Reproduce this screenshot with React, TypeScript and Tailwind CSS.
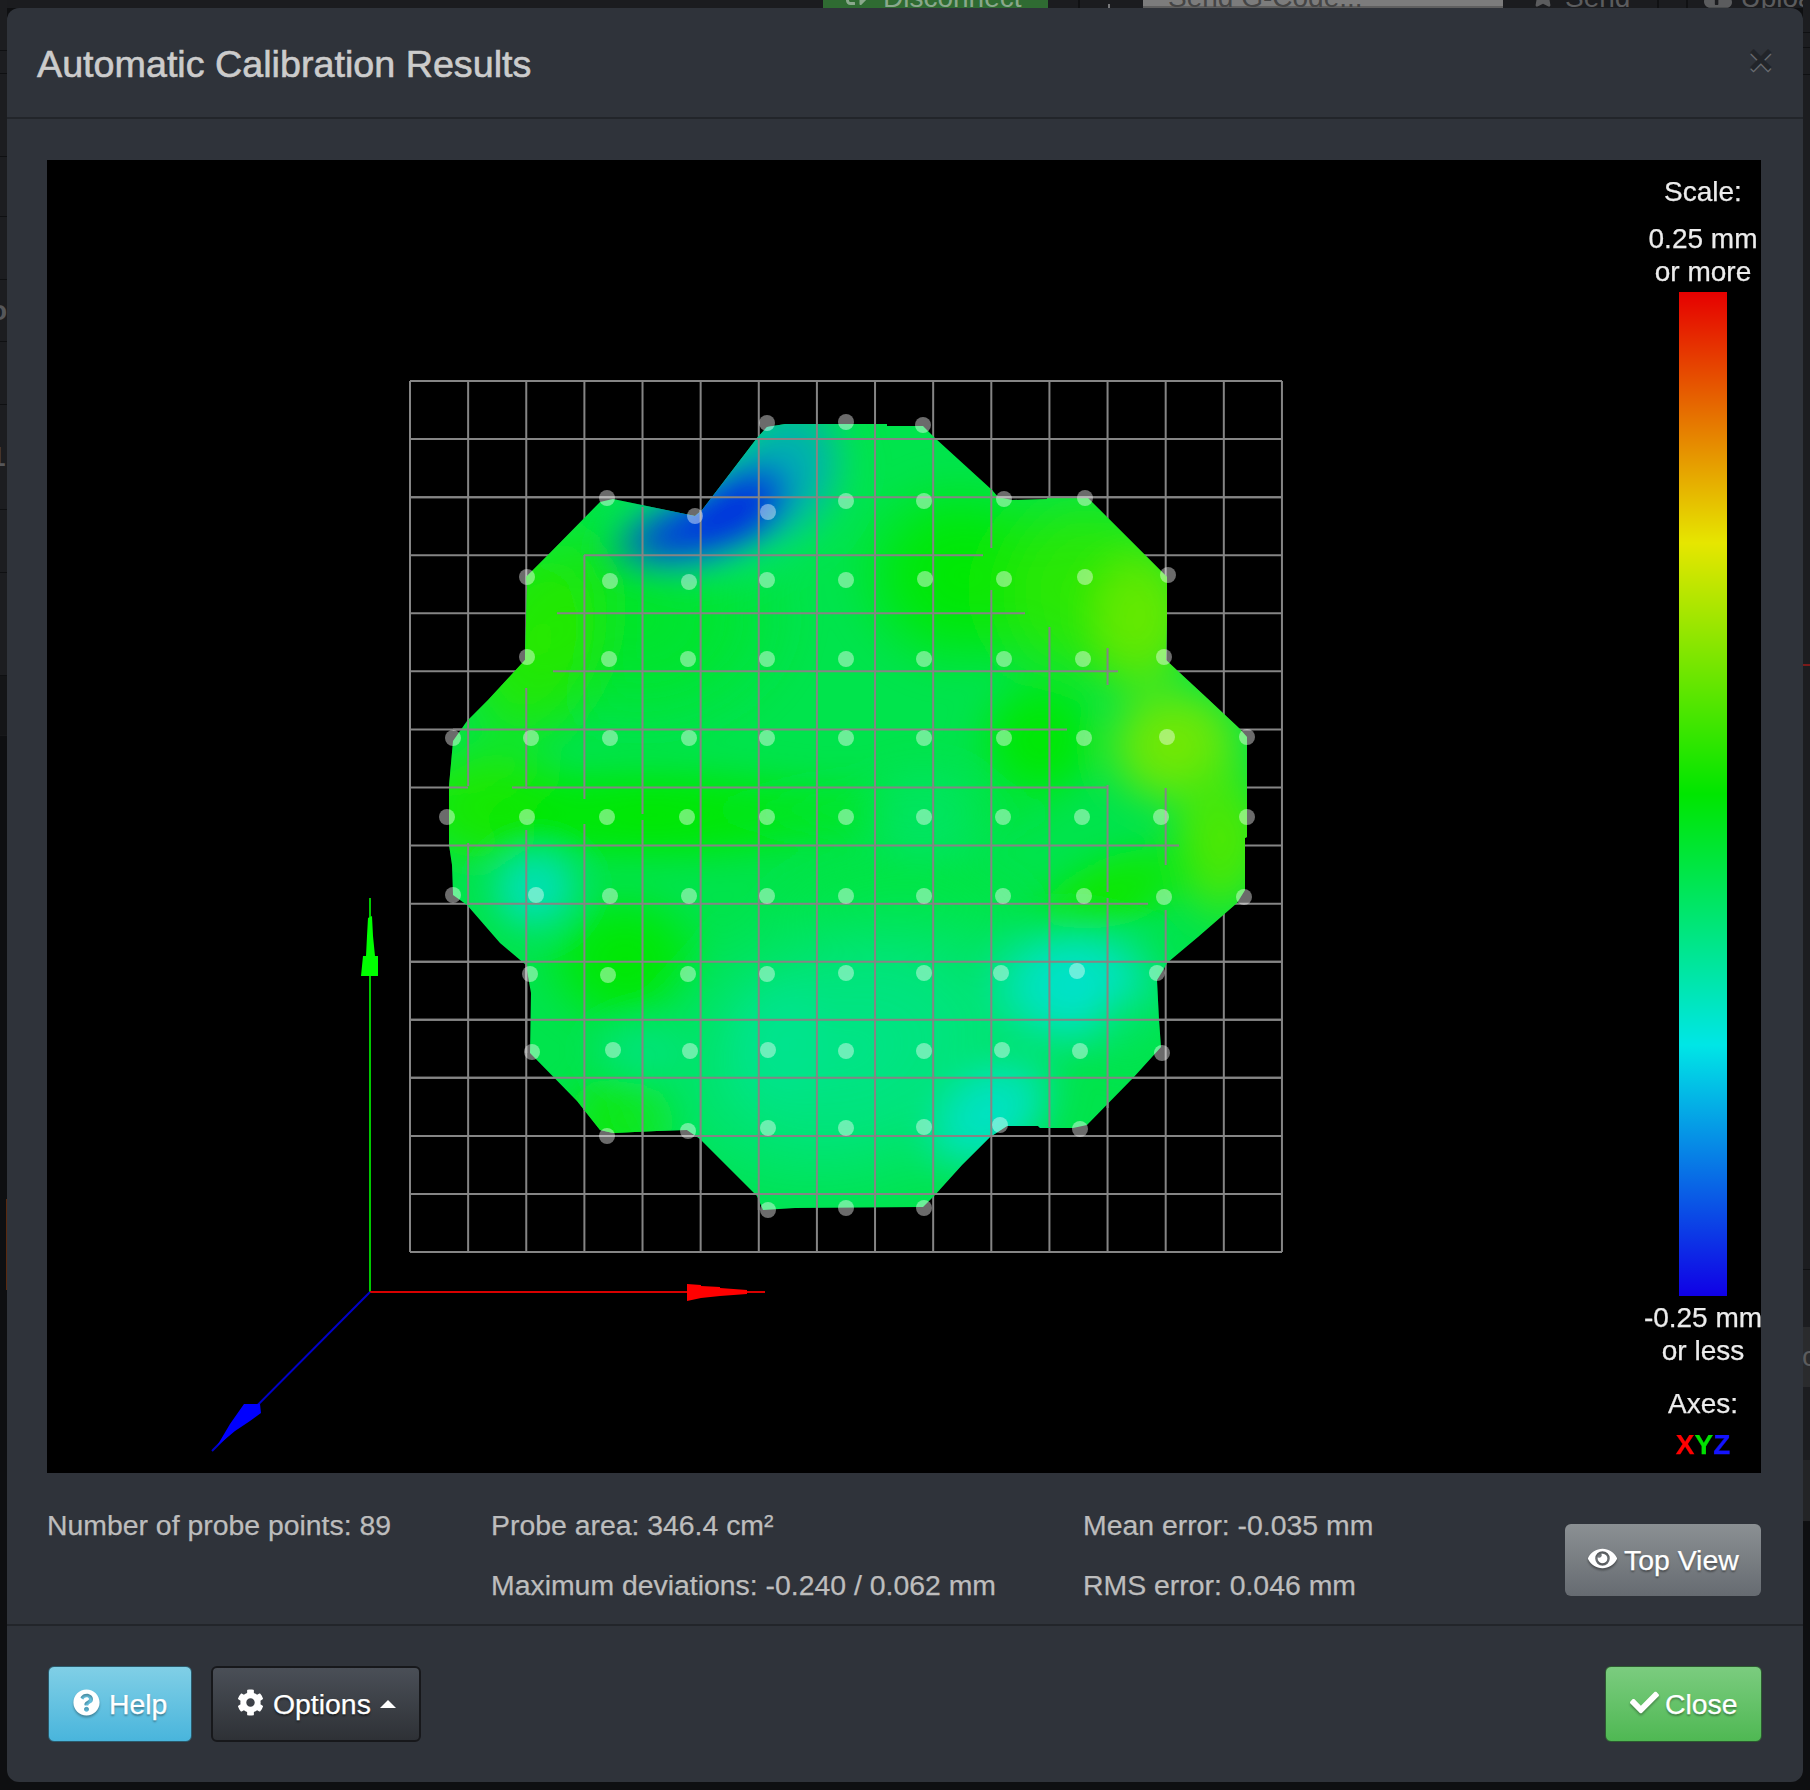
import { FaCheck, FaCloudUploadAlt, FaCog, FaEye, FaQuestionCircle, FaSignOutAlt, FaStar } from "react-icons/fa";

const font = "font-['Liberation_Sans','Arial',sans-serif]";

const outline =
  "767,427 785,424 887,424 887,426 923,426 935,438 992,490 998,497 1012,500 1047,499 1047,497 1087,497 1140,550 1167,577 1167,620 1166,660 1207,698 1239,728 1247,737 1247,837 1245,838 1245,890 1237,903 1198,937 1167,963 1162,972 1157,980 1159,1020 1161,1047 1133,1078 1087,1125 1073,1128 1040,1128 1038,1126 1007,1126 990,1137 962,1165 935,1195 923,1207 795,1208 763,1210 757,1196 700,1139 687,1130 657,1131 613,1133 600,1130 577,1101 530,1053 531,993 526,965 500,943 467,905 453,895 452,865 449,845 449,786 453,741 467,721 488,700 525,660 527,587 526,577 548,555 600,502 613,499 695,516 702,510 757,438";

// height colours laid over the base green: x, y, rx, ry, rotation, colour, strength
const blobs: [number, number, number, number, number, string, number][] = [
  [640, 620, 170, 130, 0, "#00e42c", 1],
  [540, 640, 90, 140, 20, "#26e800", 1],
  [960, 575, 120, 110, 0, "#00e800", 1],
  [1085, 590, 130, 125, 0, "#2ee800", 1],
  [1140, 620, 70, 95, 0, "#68e800", 1],
  [1040, 740, 75, 75, 0, "#00e800", 1],
  [1175, 745, 90, 80, 0, "#78e800", 1],
  [1220, 840, 65, 100, 0, "#50e800", 1],
  [1110, 895, 110, 50, -25, "#10e800", 1],
  [900, 905, 150, 60, 0, "#00e640", 1],
  [490, 805, 100, 75, 0, "#26e800", 1],
  [650, 815, 260, 60, 0, "#00e800", 1],
  [880, 810, 190, 40, 0, "#00e62c", 0.8],
  [625, 960, 95, 80, 0, "#00e800", 1],
  [625, 1120, 75, 60, 0, "#12e810", 1],
  [535, 888, 58, 56, -20, "#00e0b8", 1],
  [925, 815, 80, 60, 0, "#00e474", 0.7],
  [640, 1050, 60, 45, 0, "#00e490", 0.6],
  [850, 1050, 250, 170, -15, "#00e48a", 0.95],
  [780, 1040, 65, 80, 0, "#00e498", 0.6],
  [1075, 985, 105, 80, 0, "#00e2d0", 1],
  [990, 1115, 90, 62, -35, "#00e2c8", 1],
  [1130, 1030, 50, 50, 0, "#00e454", 0.6],
  [740, 495, 140, 100, -28, "#00e082", 1],
  [785, 470, 68, 88, 20, "#00a8b8", 1],
  [695, 530, 100, 46, -15, "#0038e0", 1],
  [738, 505, 68, 48, -30, "#0030e0", 1],
];

const fullH = [1, 2, 10, 11, 12, 13, 14, 15];
const gridPos = Array.from({ length: 16 }, (_, i) => i);
const gridX = (i: number) => 410 + i * 58.13;
const gridY = (j: number) => 381 + j * 58.07;

// grid pieces that the mesh does not hide: [line index, from, to]
const overH: [number, number, number][] = [
  [3, 584, 983],
  [4, 557, 1025],
  [5, 553, 1118],
  [6, 453, 1067],
  [7, 449, 468],
  [7, 512, 1108],
  [8, 449, 1179],
  [9, 467, 1148],
];
const overV: [number, number, number][] = [
  [1, 720, 786],
  [1, 843, 905],
  [2, 688, 789],
  [2, 830, 1053],
  [3, 555, 799],
  [3, 824, 1110],
  [4, 507, 814],
  [4, 820, 1135],
  [5, 510, 1190],
  [6, 438, 1210],
  [7, 424, 1210],
  [8, 424, 1207],
  [9, 438, 1195],
  [10, 490, 548],
  [10, 590, 1137],
  [11, 627, 1127],
  [12, 648, 685],
  [12, 785, 892],
  [12, 898, 1108],
  [13, 788, 865],
  [13, 910, 963],
];

const probes = [
  [767, 423], [846, 422], [923, 425],
  [607, 498], [695, 516], [768, 512], [846, 501], [924, 501], [1004, 499], [1085, 498],
  [527, 577], [610, 581], [689, 582], [767, 580], [846, 580], [925, 579], [1004, 579], [1085, 577], [1168, 575],
  [527, 657], [609, 659], [688, 659], [767, 659], [846, 659], [924, 659], [1004, 659], [1083, 659], [1164, 657],
  [453, 738], [531, 738], [610, 738], [689, 738], [767, 738], [846, 738], [924, 738], [1004, 738], [1084, 738], [1167, 737], [1247, 737],
  [447, 817], [527, 817], [607, 817], [687, 817], [767, 817], [846, 817], [924, 817], [1003, 817], [1082, 817], [1161, 817], [1247, 817],
  [453, 895], [536, 895], [610, 896], [689, 896], [767, 896], [846, 896], [924, 896], [1003, 896], [1084, 896], [1164, 897], [1244, 897],
  [530, 974], [608, 975], [688, 974], [767, 974], [846, 973], [924, 973], [1001, 973], [1077, 971], [1157, 973],
  [532, 1052], [613, 1050], [690, 1051], [768, 1050], [846, 1051], [924, 1051], [1002, 1050], [1080, 1051], [1162, 1053],
  [607, 1136], [688, 1131], [768, 1128], [846, 1128], [924, 1127], [1000, 1125], [1080, 1129],
  [768, 1210], [846, 1208], [924, 1208],
];

function MeshPlot() {
  return (
    <svg viewBox="47 160 1598 1313" className="block h-[1313px] w-[1598px]">
      <defs>
        <clipPath id="mesh">
          <polygon points={outline} />
        </clipPath>
        <filter id="soften" x="-10%" y="-10%" width="120%" height="120%">
          <feGaussianBlur stdDeviation="13" />
        </filter>
        {blobs.map((b, i) => (
          <radialGradient key={i} id={`blob${i}`}>
            <stop offset="0" stopColor={b[5]} stopOpacity={b[6]} />
            <stop offset="0.45" stopColor={b[5]} stopOpacity={b[6] * 0.8} />
            <stop offset="0.75" stopColor={b[5]} stopOpacity={b[6] * 0.32} />
            <stop offset="1" stopColor={b[5]} stopOpacity="0" />
          </radialGradient>
        ))}
      </defs>

      <g stroke="#858585" strokeWidth="2">
        {gridPos.map((i) => (
          <line key={i} x1={gridX(i)} y1={381} x2={gridX(i)} y2={1252} />
        ))}
        {gridPos.map((j) => (
          <line key={j} x1={410} y1={gridY(j)} x2={1282} y2={gridY(j)} />
        ))}
      </g>

      <g clipPath="url(#mesh)">
        <rect x="400" y="380" width="900" height="880" fill="#00e44c" />
        <g filter="url(#soften)">
          {blobs.map((b, i) => (
            <ellipse
              key={i}
              cx={b[0]}
              cy={b[1]}
              rx={b[2]}
              ry={b[3]}
              transform={`rotate(${b[4]} ${b[0]} ${b[1]})`}
              fill={`url(#blob${i})`}
            />
          ))}
        </g>
      </g>

      <g stroke="#858585" strokeWidth="2">
        {fullH.map((j) => (
          <line key={j} x1={410} y1={gridY(j)} x2={1282} y2={gridY(j)} />
        ))}
        {overH.map(([j, a, b], i) => (
          <line key={i} x1={a} y1={gridY(j)} x2={b} y2={gridY(j)} />
        ))}
        {overV.map(([k, a, b], i) => (
          <line key={i} x1={gridX(k)} y1={a} x2={gridX(k)} y2={b} />
        ))}
      </g>

      <g fill="#fff" fillOpacity="0.42">
        {probes.map(([x, y], i) => (
          <circle key={i} cx={x} cy={y} r="8" />
        ))}
      </g>

      <line x1="370" y1="1292" x2="370" y2="898" stroke="#00c800" strokeWidth="2" />
      <polygon points="361,976 363,956 366,956 367,936 368,918 372,916 373,936 375,956 378,956 378,976" fill="#00ff00" />
      <line x1="370" y1="1292" x2="765" y2="1292" stroke="#d80000" strokeWidth="2" />
      <polygon points="687,1284 701,1285 701,1286 720,1287 720,1288 747,1290 747,1294 720,1296 701,1298 687,1301" fill="#ff0000" />
      <line x1="370" y1="1292" x2="212" y2="1451" stroke="#0000c8" strokeWidth="2" />
      <polygon points="244,1404 260,1404 261,1413 250,1421 235,1431 217,1446 230,1424" fill="#0000ff" />
    </svg>
  );
}

function Backdrop() {
  return (
    <>
      <div className="absolute left-0 right-0 top-0 flex h-2 overflow-hidden bg-[#1b1c1f] text-[28px] leading-7 text-[#5b5c5e]">
        <div className="ml-[823px] flex h-2 w-[225px] shrink-0 items-start bg-[#2f6b32] pl-[23px] text-[#8aa88c]">
          <FaSignOutAlt className="-mt-4 mr-[13px] size-6 shrink-0" />
          <div className="-mt-4">Disconnect</div>
        </div>
        <div className="ml-[30px] h-2 w-[2px] shrink-0 bg-[#101113]" />
        <div className="ml-[28px] mt-1 h-1 w-[2px] shrink-0 bg-[#77787a]" />
        <div className="ml-[33px] h-2 w-[360px] shrink-0 border-b-2 border-[#5f5f5f] bg-[#7c7c7c] pl-[25px] text-[#454545]">
          <div className="-mt-4">Send G-Code...</div>
        </div>
        <div className="ml-7 flex h-2 shrink-0 items-start">
          <FaStar className="-mt-4 mr-2.5 size-6 shrink-0" />
          <div className="-mt-4">Send</div>
        </div>
        <div className="ml-[27px] h-2 w-[2px] shrink-0 bg-[#101113]" />
        <div className="ml-[27px] h-2 w-[2px] shrink-0 bg-[#101113]" />
        <div className="ml-4 flex h-2 shrink-0 items-start">
          <FaCloudUploadAlt className="-mt-4 mr-2 size-7 shrink-0" />
          <div className="-mt-4">Upload</div>
        </div>
      </div>

      <div className="absolute left-0 top-0 flex w-[7px] flex-col overflow-hidden bg-[#0e0f11] text-[28px] font-bold text-[#56575a]">
        <div className="h-[51px] border-b border-[#0f1012] bg-[#1c1d20]" />
        <div className="h-[23px] border-b border-[#0f1012] bg-[#1c1d20]" />
        <div className="h-[83px] border-b border-[#0f1012] bg-[#1c1d20]" />
        <div className="h-[60px] border-b border-[#0f1012] bg-[#1c1d20]" />
        <div className="h-[63px] border-b border-[#0f1012] bg-[#1c1d20]" />
        <div className="flex h-[62px] items-center border-b border-[#0f1012] bg-[#1c1d20]">
          <span className="-ml-2.5">o</span>
        </div>
        <div className="h-[63px] border-b border-[#0f1012] bg-[#1c1d20]" />
        <div className="flex h-[105px] items-center border-b border-[#0f1012] bg-[#1c1d20]">
          <span className="-ml-2.5">1</span>
        </div>
        <div className="h-[63px] border-b border-[#0f1012] bg-[#1c1d20]" />
        <div className="h-[103px] border-b border-[#0f1012] bg-[#1c1d20]" />
        <div className="h-[60px] border-b border-[#17181a] bg-[#141517]" />
      </div>
      <div className="absolute left-[6px] top-[1199px] h-[91px] w-px bg-[#5a2a10]" />

      <div className="absolute right-0 top-0 flex w-[7px] flex-col overflow-hidden text-[28px] text-[#5b5c5e]">
        <div className="h-[33px] border-b border-[#0f1012] bg-[#1c1d20]" />
        <div className="h-[15px] border-b border-[#0f1012] bg-[#1c1d20]" />
        <div className="h-[27px] border-b border-[#0f1012] bg-[#1c1d20]" />
        <div className="h-[591px] border-b-2 border-[#7a1a1a] bg-[#1c1d20]" />
        <div className="h-[604px] border-b border-[#0f1012] bg-[#1c1d20]" />
        <div className="h-[57px] bg-[#1c1d20]" />
        <div className="flex h-[60px] items-center bg-[#2a2b2d]">
          <span className="-ml-px">c</span>
        </div>
        <div className="h-[73px] bg-[#1c1d20]" />
        <div className="h-[62px] border-b border-[#0f1012] bg-[#232426]" />
      </div>
    </>
  );
}

export default function App() {
  return (
    <div className={`relative h-[1790px] w-[1810px] overflow-hidden bg-[#0e0f11] ${font}`}>
      <Backdrop />

      <div className="absolute left-[7px] top-2 h-[1774px] w-[1796px] rounded-xl bg-[#2f333a] text-[28.4px] text-[#bdbdbd] [-webkit-text-stroke:0.25px_currentColor]">
        <div className="flex h-[111px] items-start justify-between border-b-2 border-[#22252a] pl-[30px] pr-[30px]">
          <h3 className="mt-9 text-[37.7px] leading-10 text-[#cccccc] [-webkit-text-stroke:0.6px_#cccccc]">Automatic Calibration Results</h3>
          <span className="mt-[27px] text-[42px] font-bold leading-[50px] text-[#22252a] [text-shadow:0_2px_0_#6a6d72]">×</span>
        </div>

        <div className="h-[1505px] px-10 pr-[42px] pt-[41px]">
          <div className="flex h-[1313px] w-[1714px] bg-black">
            <MeshPlot />
            <div className="flex w-[116px] flex-col items-center whitespace-nowrap pt-4 text-[28px] leading-8 text-[#ececec] blur-[0.4px]">
              <div>Scale:</div>
              <div className="mt-[14px] leading-[33px]">0.25 mm</div>
              <div className="leading-[33px]">or more</div>
              <div className="mt-1 h-[1004px] w-12 shrink-0 bg-[linear-gradient(to_bottom,#e60000,#e6e600_25%,#00e600_50%,#00e6e6_75%,#1000e6)]" />
              <div className="mt-[5px] leading-[33px]">-0.25 mm</div>
              <div className="leading-[33px]">or less</div>
              <div className="mt-[21px]">Axes:</div>
              <div className="mt-[9px] font-bold">
                <span className="text-[#ff0000]">X</span>
                <span className="text-[#00e000]">Y</span>
                <span className="text-[#1414ff]">Z</span>
              </div>
            </div>
          </div>

          <div className="mt-[22px] flex leading-[60px]">
            <div className="w-[444px]">Number of probe points: 89</div>
            <div className="w-[592px]">
              <div>Probe area: 346.4 cm²</div>
              <div>Maximum deviations: -0.240 / 0.062 mm</div>
            </div>
            <div className="w-[482px]">
              <div>Mean error: -0.035 mm</div>
              <div>RMS error: 0.046 mm</div>
            </div>
            <button className="mt-[29px] flex h-[72px] w-[196px] items-center rounded-md bg-[linear-gradient(to_bottom,#8b9093,#666b71)] pl-[23px] leading-none text-white [text-shadow:0_2px_2px_rgba(0,0,0,0.4)]">
              <FaEye className="-mt-1 mr-[7px] size-[29px] drop-shadow-[0_2px_1px_rgba(0,0,0,0.4)]" />
              Top View
            </button>
          </div>
        </div>

        <div className="flex h-[158px] items-center justify-between border-t-2 border-[#22252a] pl-[41px] pr-[41px]">
          <div className="flex gap-[19px]">
            <button className="flex h-[76px] w-[144px] items-center rounded-md border border-[#2b5a6b] bg-[linear-gradient(to_bottom,#80cfe6,#49b5dc)] pl-6 text-white [text-shadow:0_2px_2px_rgba(0,0,0,0.35)]">
              <FaQuestionCircle className="-mt-1 mr-[9px] size-[27px] drop-shadow-[0_2px_1px_rgba(0,0,0,0.3)]" />
              Help
            </button>
            <button className="flex h-[76px] w-[210px] items-center rounded-md border-2 border-[#17181b] bg-[linear-gradient(to_bottom,#4a4f57,#2e3136)] pl-6 text-white [text-shadow:0_2px_2px_rgba(0,0,0,0.5)]">
              <FaCog className="-mt-1 mr-[9px] size-[27px]" />
              Options
              <span className="ml-[9px] h-0 w-0 border-x-[8px] border-b-[8px] border-x-transparent border-b-white" />
            </button>
          </div>
          <button className="flex h-[76px] w-[157px] items-center rounded-md border border-[#2c5a30] bg-[linear-gradient(to_bottom,#7bcc7f,#4fb853)] pl-6 text-white [text-shadow:0_2px_2px_rgba(0,0,0,0.35)]">
            <FaCheck className="-mt-1 mr-[6px] size-[29px] drop-shadow-[0_2px_1px_rgba(0,0,0,0.3)]" />
            Close
          </button>
        </div>
      </div>
    </div>
  );
}
